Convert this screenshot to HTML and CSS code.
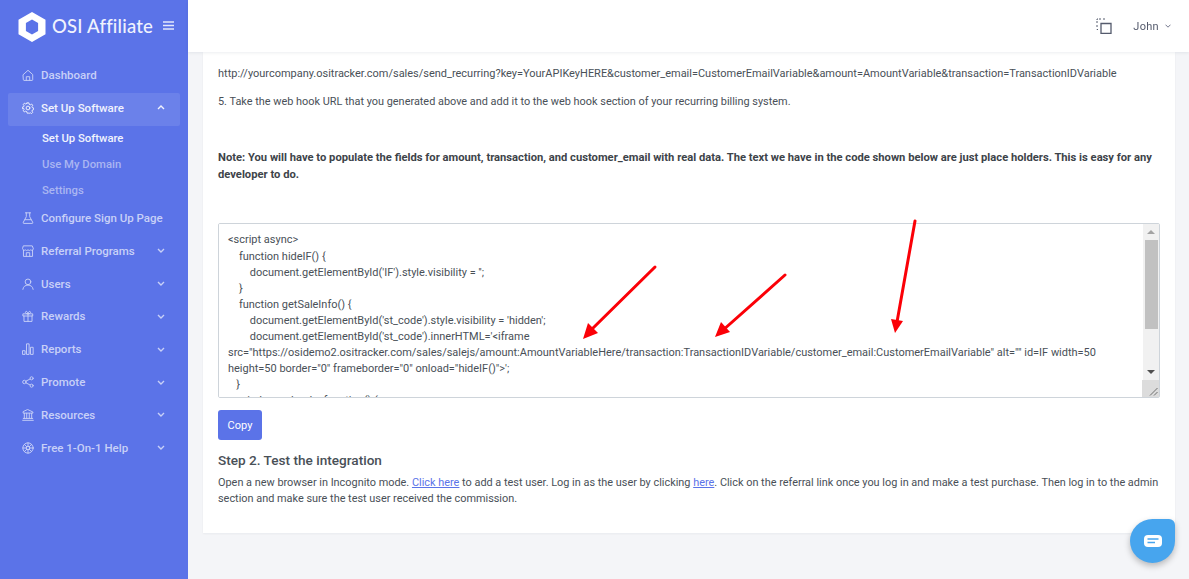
FILE: index.html
```html
<!DOCTYPE html>
<html lang="en">
<head>
<meta charset="utf-8">
<title>OSI Affiliate</title>
<link rel="stylesheet" href="styles.css">
</head>
<body>
<div class="app">
  <aside class="sidebar">
    <div class="brand">
      <svg class="logo" viewBox="0 0 28 30"><path fill="#fff" fill-rule="evenodd" d="M14 0 27.5 7.7v14.6L14 30 .5 22.3V7.700zM14 7.500 7.900 11v8L14 22.500 20.100 19v-8z"/></svg>
      <span class="brand-name">OSI Affiliate</span>
      <svg class="burger" viewBox="0 0 11 9"><path d="M0 1h11M0 4.500h11M0 8h11" stroke="#e4e8fb" stroke-width="1.600"/></svg>
    </div>
    <nav class="menu">
      <a class="item"><svg class="ico" viewBox="0 0 14 14"><path d="M1.500 6.500 7 1.500l5.500 5v6a.8.8 0 0 1-.8.8H2.300a.8.8 0 0 1-.8-.8zM5 13.300V9h4v4.300"/></svg><span class="label">Dashboard</span></a>
      <a class="item active"><svg class="ico" viewBox="0 0 14 14"><circle cx="7" cy="7" r="2.200"/><path d="M6 1h2l.4 1.700 1.300.6 1.500-.9 1.300 1.400-.9 1.500.5 1.300 1.500.4v1.900l-1.500.4-.5 1.300.9 1.500-1.300 1.400-1.500-.9-1.300.6L8 13H6l-.4-1.700-1.300-.6-1.500.9-1.300-1.400.9-1.500-.5-1.300L.4 7.900V6l1.500-.4.5-1.300-.9-1.500 1.300-1.400 1.500.9 1.300-.6z"/></svg><span class="label">Set Up Software</span><svg class="chev" viewBox="0 0 8 5"><path d="M1 4l3-3 3 3"/></svg></a>
      <div class="sub">
        <a class="sub-item current">Set Up Software</a>
        <a class="sub-item">Use My Domain</a>
        <a class="sub-item">Settings</a>
      </div>
      <a class="item"><svg class="ico" viewBox="0 0 14 14"><path d="M4 1h6M5 1v4.500L1.500 12a.9.9 0 0 0 .8 1.300h9.400a.9.9 0 0 0 .8-1.300L9 5.500V1M3.500 9h7"/></svg><span class="label">Configure Sign Up Page</span></a>
      <a class="item"><svg class="ico" viewBox="0 0 14 14"><path d="M2 1h10l1.300 3.500a1.900 1.900 0 0 1-3.100 1.200 2.400 2.400 0 0 1-3.200 0 2.400 2.400 0 0 1-3.200 0A1.900 1.900 0 0 1 .7 4.500zM1.700 6v7.300h10.600V6M5 13V9h4v4"/></svg><span class="label">Referral Programs</span><svg class="chev" viewBox="0 0 8 5"><path d="M1 1l3 3 3-3"/></svg></a>
      <a class="item"><svg class="ico" viewBox="0 0 14 14"><circle cx="7" cy="4.500" r="3.300"/><path d="M1 13.300c.4-3.300 2.800-5 6-5s5.600 1.700 6 5"/></svg><span class="label">Users</span><svg class="chev" viewBox="0 0 8 5"><path d="M1 1l3 3 3-3"/></svg></a>
      <a class="item"><svg class="ico" viewBox="0 0 14 14"><path d="M1.500 4.500h11v2.500h-11zM2.300 7v6.300h9.400V7M7 4.500v8.800M7 4.500C5 4.500 3.800 3.800 4 2.500c.3-1.500 2.500-1.300 3 2 .5-3.300 2.700-3.500 3-2 .2 1.300-1 2-3 2z"/></svg><span class="label">Rewards</span><svg class="chev" viewBox="0 0 8 5"><path d="M1 1l3 3 3-3"/></svg></a>
      <a class="item"><svg class="ico" viewBox="0 0 14 14"><path d="M1 9h2.600v4.300H1zM5.700 1h2.600v12.300H5.700zM10.400 5H13v8.300h-2.600z"/></svg><span class="label">Reports</span><svg class="chev" viewBox="0 0 8 5"><path d="M1 1l3 3 3-3"/></svg></a>
      <a class="item"><svg class="ico" viewBox="0 0 14 14"><circle cx="2.800" cy="7" r="2"/><circle cx="11.200" cy="2.700" r="1.800"/><circle cx="11.200" cy="11.300" r="1.800"/><path d="M4.600 6l4.900-2.500M4.600 8l4.900 2.500"/></svg><span class="label">Promote</span><svg class="chev" viewBox="0 0 8 5"><path d="M1 1l3 3 3-3"/></svg></a>
      <a class="item"><svg class="ico" viewBox="0 0 14 14"><path d="M7 .8l5.700 2.700v1.300H1.300V3.500zM2.700 5v6M5.500 5v6M8.500 5v6M11.300 5v6M1.500 11h11M.8 13.200h12.400"/></svg><span class="label">Resources</span><svg class="chev" viewBox="0 0 8 5"><path d="M1 1l3 3 3-3"/></svg></a>
      <a class="item"><svg class="ico" viewBox="0 0 14 14"><circle cx="7" cy="7" r="6"/><circle cx="7" cy="7" r="2"/><path d="M7 1v4M7 9v4M1 7h4M9 7h4M2.800 2.800l2.800 2.800M8.400 8.400l2.800 2.800M11.200 2.800 8.400 5.600M5.600 8.400l-2.800 2.800"/></svg><span class="label">Free 1-On-1 Help</span><svg class="chev" viewBox="0 0 8 5"><path d="M1 1l3 3 3-3"/></svg></a>
    </nav>
  </aside>
  <div class="main">
    <header class="topbar">
      <svg class="top-icon" viewBox="0 0 16 16"><path class="dash" d="M1 5V1h4M7 1h2M1 7v2M1 11v.5h1"/><path class="solid" d="M5 5.500h10v10H5z"/></svg>
      <span class="user">John</span>
      <svg class="user-chev" viewBox="0 0 6 4"><path d="M.5.700 3 3.200 5.500.700"/></svg>
    </header>
    <div class="content">
      <section class="card">
        <p class="p-url">http://yourcompany.ositracker.com/sales/send_recurring?key=YourAPIKeyHERE&amp;customer_email=CustomerEmailVariable&amp;amount=AmountVariable&amp;transaction=TransactionIDVariable</p>
        <p class="p-step">5. Take the web hook URL that you generated above and add it to the web hook section of your recurring billing system.</p>
        <p class="p-note"><strong>Note: You will have to populate the fields for amount, transaction, and customer_email with real data. The text we have in the code shown below are just place holders. This is easy for any developer to do.</strong></p>
        <div class="code-wrap">
          <textarea class="code" readonly spellcheck="false">&lt;script async&gt;
    function hideIF() {
        document.getElementById('IF').style.visibility = '';
    }
    function getSaleInfo() {
        document.getElementById('st_code').style.visibility = 'hidden';
        document.getElementById('st_code').innerHTML='&lt;iframe src="https://osidemo2.ositracker.com/sales/salejs/amount:AmountVariableHere/transaction:TransactionIDVariable/customer_email:CustomerEmailVariable" alt="" id=IF width=50 height=50 border="0" frameborder="0" onload="hideIF()"&gt;';
   }
    window.onload = function() {
        getSaleInfo();
    };
    var st_code = document.createElement('div');
    st_code.id = 'st_code';
    document.body.appendChild(st_code);
&lt;/script&gt;</textarea>
          <div class="scrollbar">
            <span class="arrow-up"></span>
            <span class="thumb"></span>
            <span class="arrow-down"></span>
          </div>
          <div class="resizer"><svg viewBox="0 0 9 9"><path d="M1 8.500 8.500 1M5 8.500 8.500 5"/></svg></div>
        </div>
        <button class="copy" type="button">Copy</button>
        <h2 class="step-title">Step 2. Test the integration</h2>
        <p class="p-last">Open a new browser in Incognito mode. <a class="link">Click here</a> to add a test user. Log in as the user by clicking <a class="link">here</a>. Click on the referral link once you log in and make a test purchase. Then log in to the admin section and make sure the test user received the commission.</p>
      </section>
    </div>
  </div>
</div>
<svg class="arrows" viewBox="0 0 1189 579">
  <g class="arrow"><path d="M655 267 590 331"/><path class="head" d="M583 339 588 323 598 333z"/></g>
  <g class="arrow"><path d="M785 275 722 331"/><path class="head" d="M715 337 721 322 730 332z"/></g>
  <g class="arrow"><path d="M915 221 897 322"/><path class="head" d="M895 333 891 319 903 321z"/></g>
</svg>
<div class="chat">
  <svg viewBox="0 0 18 12"><rect x="0" y="0" width="18" height="12" rx="4" fill="#fff"/><path d="M3.500 4h11M3.500 7.500h7.500" stroke="#47a5ee" stroke-width="1.300"/></svg>
</div>
</body>
</html>
```
FILE: styles.css
```css
* { box-sizing: border-box; }
html, body { margin: 0; height: 579px; overflow: hidden; }
body { font-family: Roboto, "Liberation Sans", sans-serif; color: #495057; background: #f4f5f8; }
.app { display: flex; height: 579px; }

.sidebar { width: 188px; flex: none; background: #5b73e8; padding: 0 8px; }
.brand { height: 52px; display: flex; align-items: center; padding-left: 10px; }
.logo { width: 28px; height: 30px; flex: none; margin-top: 2px; }
.brand-name { font-family: "Lato", sans-serif; font-size: 18.500px; font-weight: 500; color: #f0f2fd; margin-left: 6px; white-space: nowrap; width: 111px; letter-spacing: .2px; }
.burger { width: 11px; height: 9px; flex: none; margin-top: -2px; }

.menu { display: flex; flex-direction: column; padding-top: 8.200px; }
.item { height: 32.800px; display: flex; align-items: center; padding: 0 0 3px 14px; color: #c8d0f7; font-size: 11.500px; font-weight: 500; border-radius: 2px; white-space: nowrap; }
.item.active { background: #6b81ea; color: #f1f3fd; }
.ico { width: 12px; height: 12px; flex: none; fill: none; stroke: currentColor; stroke-width: 1.100; stroke-linejoin: round; stroke-linecap: round; margin-right: 7px; }
.label { flex: 1; }
.chev { width: 8px; height: 5px; flex: none; fill: none; stroke: currentColor; stroke-width: 1.400; margin-right: 15px; }
.sub { display: flex; flex-direction: column; padding-left: 34px; }
.sub-item { height: 25.800px; display: flex; align-items: center; font-size: 11.300px; font-weight: 500; color: #aab6f2; }
.sub-item.current { color: #f1f3fd; }

.main { flex: 1; min-width: 0; display: flex; flex-direction: column; }
.topbar { height: 52px; flex: none; background: #fff; display: flex; align-items: center; justify-content: flex-end; box-shadow: 0 1px 3px rgba(18,38,63,.08); position: relative; z-index: 1; padding-right: 18px; }
.top-icon { width: 16px; height: 16px; fill: none; stroke: #555b6d; margin-right: 21px; }
.top-icon .dash { stroke-width: 1; stroke-dasharray: 2 1; }
.top-icon .solid { stroke-width: 1.300; }
.user { font-size: 11px; color: #555b6d; letter-spacing: .3px; }
.user-chev { width: 6px; height: 4px; fill: none; stroke: #74788d; stroke-width: 1; margin-left: 6px; }

.content { flex: 1; padding: 0 14px 0 15px; }
.card { background: #fff; height: 481px; padding: 14px 15px 0; box-shadow: 0 1px 2px rgba(18,38,63,.05); display: flex; flex-direction: column; align-items: flex-start; }
.card p { margin: 0; font-size: 10.900px; line-height: 16.200px; color: #495057; }
.card .p-url { font-size: 10.970px; }
.card .p-step { margin-top: 12px; }
.card .p-note { margin-top: 39px; line-height: 17px; font-size: 11.200px; }
.p-note strong { font-weight: 700; color: #3d4349; }
.code-wrap { position: relative; width: 942px; height: 175px; margin-top: 40px; flex: none; }
.code { display: block; width: 100%; height: 100%; padding: 8px 27px 8px 9px; border: 1px solid #ced4da; border-radius: 2px; font-family: inherit; font-size: 10.970px; line-height: 16.100px; color: #495057; background: #fff; outline: none; resize: none; }
.scrollbar { position: absolute; right: 1px; top: 1px; bottom: 18px; width: 16px; background: #f1f1f1; display: flex; flex-direction: column; align-items: center; }
.arrow-up { margin-top: 6px; border: 4px solid transparent; border-top: 0; border-bottom: 4px solid #a3a3a3; }
.thumb { width: 13px; height: 89px; margin-top: 6px; background: #c1c1c1; }
.arrow-down { margin-top: auto; margin-bottom: 6px; border: 4px solid transparent; border-bottom: 0; border-top: 4px solid #505050; }
.resizer { position: absolute; right: 1px; bottom: 1px; width: 17px; height: 17px; background: #dcdcdc; display: flex; align-items: flex-end; justify-content: flex-end; }
.resizer svg { width: 9px; height: 9px; fill: none; stroke: #6f6f6f; stroke-width: 1; margin: 0 1px 1px 0; }
.copy { margin-top: 12px; width: 44px; height: 30px; border: 0; border-radius: 3px; background: #5b73e8; color: #fff; font-family: inherit; font-size: 11px; padding: 0; }
.step-title { margin: 12px 0 0; font-size: 13.600px; line-height: 16px; font-weight: 500; color: #495057; }
.card .p-last { margin-top: 7px; line-height: 16px; }
.link { color: #5b73e8; text-decoration: underline; }

.arrows { position: absolute; left: 0; top: 0; width: 1189px; height: 579px; pointer-events: none; }
.arrow path { stroke: #fb0007; stroke-width: 3; fill: none; stroke-linecap: round; }
.arrow .head { fill: #fb0007; stroke: none; }

.chat { position: absolute; left: 1130px; top: 519px; width: 45px; height: 44px; background: #47a5ee; border-radius: 50% 6px 50% 50%; display: flex; align-items: center; justify-content: center; box-shadow: 0 3px 6px rgba(0,0,0,.25); }
.chat svg { width: 18px; height: 12px; }
```
